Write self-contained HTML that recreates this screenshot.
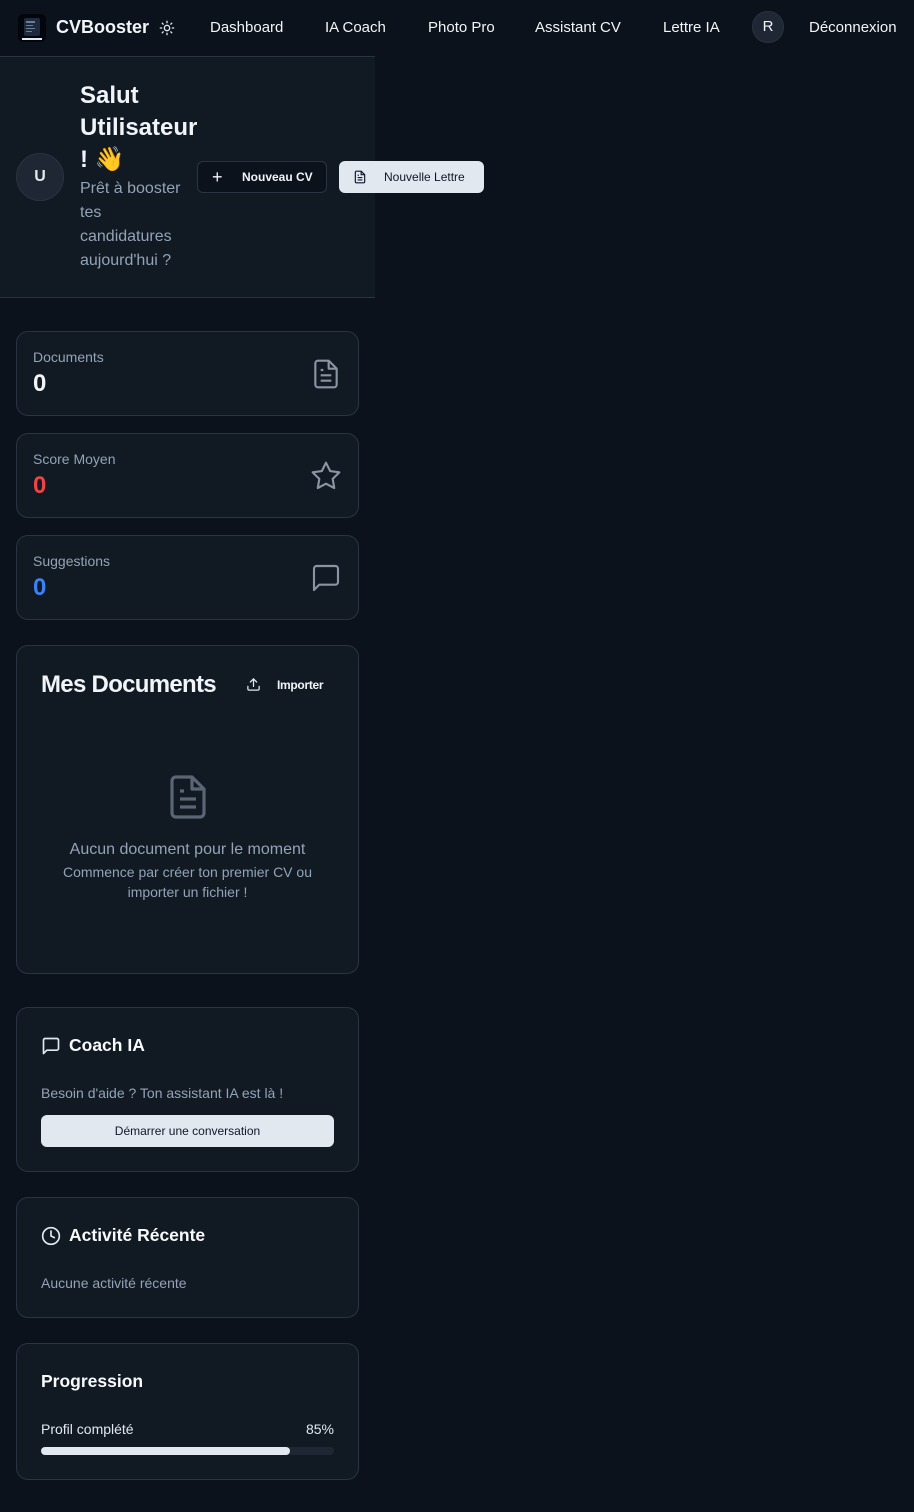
<!DOCTYPE html>
<html><head><meta charset="utf-8"><style>
*{box-sizing:border-box;margin:0;padding:0}
body{width:914px;height:1512px;background:#0c121b;font-family:"Liberation Sans",sans-serif;color:#f1f5f9;position:relative;overflow:hidden}
.a{position:absolute}
.nav{font-size:15px;color:#f1f5f9;top:19px}
.card{position:absolute;left:16px;width:343px;background:#111922;border:1px solid #2a3441;border-radius:12px}
.lbl{position:absolute;left:16px;top:17px;font-size:14px;color:#94a3b8}
.num{position:absolute;left:16px;top:38px;font-size:24px;font-weight:bold}
.ic{position:absolute;right:16px;top:26px}
.h{font-size:17.5px;font-weight:bold;color:#f8fafc}
.mut{color:#94a3b8}
</style></head><body>
<div class="a" style="left:18px;top:14px;width:28px;height:28px;background:#02060c;border-radius:5px">
<div class="a" style="left:6px;top:4px;width:16px;height:18px;background:#1e2a3e;border-radius:2px"></div>
<div class="a" style="left:8px;top:7px;width:9px;height:2px;background:#6b7d95"></div>
<div class="a" style="left:8px;top:11px;width:7px;height:1px;background:#6b7d95"></div>
<div class="a" style="left:8px;top:14px;width:9px;height:1px;background:#6b7d95"></div>
<div class="a" style="left:8px;top:17px;width:6px;height:1px;background:#6b7d95"></div>
<div class="a" style="left:4px;top:24px;width:20px;height:2px;background:#e2e8f0"></div>
</div>
<div class="a" style="left:56px;top:17px;font-size:18px;font-weight:bold">CVBooster</div>
<svg class="a" style="left:159px;top:20px" width="16" height="16" viewBox="0 0 24 24" fill="none" stroke="#e2e8f0" stroke-width="2" stroke-linecap="round"><circle cx="12" cy="12" r="4"/><path d="M12 2v2M12 20v2M4.9 4.9l1.4 1.4M17.7 17.7l1.4 1.4M2 12h2M20 12h2M6.3 17.7l-1.4 1.4M19.1 4.9l-1.4 1.4"/></svg>
<div class="a nav" style="left:210px">Dashboard</div>
<div class="a nav" style="left:325px">IA Coach</div>
<div class="a nav" style="left:428px">Photo Pro</div>
<div class="a nav" style="left:535px">Assistant CV</div>
<div class="a nav" style="left:663px">Lettre IA</div>
<div class="a" style="left:752px;top:11px;width:32px;height:32px;border-radius:50%;background:#1e2733;border:1px solid #2a3441;text-align:center;line-height:30px;font-size:15px">R</div>
<div class="a nav" style="left:809px">Déconnexion</div>
<div class="a" style="left:0;top:56px;width:375px;height:242px;background:#111922;border-top:1px solid #2a3441;border-bottom:1px solid #2a3441"></div>
<div class="a" style="left:16px;top:153px;width:48px;height:48px;border-radius:50%;background:#1e2733;border:1px solid #2a3441;text-align:center;line-height:46px;font-size:16px;font-weight:bold;color:#e2e8f0">U</div>
<div class="a" style="left:80px;top:80px;font-size:24px;font-weight:bold;line-height:32px;width:130px">Salut Utilisateur ! 👋</div>
<div class="a mut" style="left:80px;top:177px;font-size:16px;line-height:24px;width:115px">Prêt à booster tes candidatures aujourd'hui ?</div>
<div class="a" style="left:197px;top:161px;width:130px;height:32px;border:1px solid #2a3441;border-radius:6px;background:#0c121b;font-size:12px;font-weight:bold;line-height:30px">
<span class="a" style="left:14px;top:0;font-size:18px;font-weight:normal">+</span><span class="a" style="left:44px">Nouveau CV</span></div>
<div class="a" style="left:339px;top:161px;width:145px;height:32px;border-radius:6px;background:#e2e8f0;color:#0f172a;font-size:12px;line-height:32px">
<svg class="a" style="left:14px;top:9px" width="14" height="14" viewBox="0 0 24 24" fill="none" stroke="#0f172a" stroke-width="2"><path d="M14 2H6a2 2 0 0 0-2 2v16a2 2 0 0 0 2 2h12a2 2 0 0 0 2-2V8z"/><path d="M14 2v6h6M16 13H8M16 17H8M10 9H8"/></svg>
<span class="a" style="left:45px">Nouvelle Lettre</span></div>
<div class="card" style="top:331px;height:85px"><div class="lbl">Documents</div><div class="num">0</div>
<svg class="ic" width="32" height="32" viewBox="0 0 24 24" fill="none" stroke="#8a94a3" stroke-width="1.6" stroke-linejoin="round"><path d="M14 2H6a2 2 0 0 0-2 2v16a2 2 0 0 0 2 2h12a2 2 0 0 0 2-2V8z"/><path d="M14 2v6h6M16 13H8M16 17H8M10 9H8"/></svg></div>
<div class="card" style="top:433px;height:85px"><div class="lbl">Score Moyen</div><div class="num" style="color:#ef4444">0</div>
<svg class="ic" width="32" height="32" viewBox="0 0 24 24" fill="none" stroke="#8a94a3" stroke-width="1.6" stroke-linejoin="round"><path d="M12 2l3.09 6.26L22 9.27l-5 4.87 1.18 6.88L12 17.77l-6.18 3.25L7 14.14 2 9.27l6.91-1.01z"/></svg></div>
<div class="card" style="top:535px;height:85px"><div class="lbl">Suggestions</div><div class="num" style="color:#3b82f6">0</div>
<svg class="ic" width="32" height="32" viewBox="0 0 24 24" fill="none" stroke="#8a94a3" stroke-width="1.6" stroke-linejoin="round"><path d="M21 15a2 2 0 0 1-2 2H7l-4 4V5a2 2 0 0 1 2-2h14a2 2 0 0 1 2 2z"/></svg></div>
<div class="card" style="top:645px;height:329px">
<div class="a" style="left:24px;top:25px;font-size:24px;font-weight:bold;letter-spacing:-0.7px">Mes Documents</div>
<svg class="a" style="left:229px;top:31px" width="15" height="15" viewBox="0 0 24 24" fill="none" stroke="#e2e8f0" stroke-width="2" stroke-linecap="round"><path d="M21 15v4a2 2 0 0 1-2 2H5a2 2 0 0 1-2-2v-4M17 8l-5-5-5 5M12 3v12"/></svg>
<div class="a" style="left:260px;top:32px;font-size:12px;font-weight:bold;letter-spacing:-0.3px">Importer</div>
<svg class="a" style="left:147px;top:127px" width="48" height="48" viewBox="0 0 24 24" fill="none" stroke="#5b6574" stroke-width="1.6" stroke-linejoin="round"><path d="M14 2H6a2 2 0 0 0-2 2v16a2 2 0 0 0 2 2h12a2 2 0 0 0 2-2V8z"/><path d="M14 2v6h6M16 13H8M16 17H8M10 9H8"/></svg>
<div class="a mut" style="left:0;width:341px;top:195px;text-align:center;font-size:16px">Aucun document pour le moment</div>
<div class="a mut" style="left:30px;width:281px;top:216px;text-align:center;font-size:14px;line-height:20px">Commence par créer ton premier CV ou importer un fichier !</div>
</div>
<div class="card" style="top:1007px;height:165px">
<svg class="a" style="left:24px;top:28px" width="20" height="20" viewBox="0 0 24 24" fill="none" stroke="#e2e8f0" stroke-width="2" stroke-linejoin="round"><path d="M21 15a2 2 0 0 1-2 2H7l-4 4V5a2 2 0 0 1 2-2h14a2 2 0 0 1 2 2z"/></svg>
<div class="a h" style="left:52px;top:27px">Coach IA</div>
<div class="a mut" style="left:24px;top:77px;font-size:14px">Besoin d'aide ? Ton assistant IA est là !</div>
<div class="a" style="left:24px;top:107px;width:293px;height:32px;background:#e2e8f0;border-radius:6px;color:#0f172a;font-size:12px;text-align:center;line-height:32px">Démarrer une conversation</div>
</div>
<div class="card" style="top:1197px;height:121px">
<svg class="a" style="left:24px;top:28px" width="20" height="20" viewBox="0 0 24 24" fill="none" stroke="#e2e8f0" stroke-width="2" stroke-linecap="round"><circle cx="12" cy="12" r="10"/><path d="M12 6v6l4 2"/></svg>
<div class="a h" style="left:52px;top:27px">Activité Récente</div>
<div class="a mut" style="left:24px;top:77px;font-size:14px">Aucune activité récente</div>
</div>
<div class="card" style="top:1343px;height:137px">
<div class="a h" style="left:24px;top:27px">Progression</div>
<div class="a" style="left:24px;top:77px;font-size:14px;color:#e2e8f0">Profil complété</div>
<div class="a" style="right:24px;top:77px;font-size:14px;color:#e2e8f0">85%</div>
<div class="a" style="left:24px;top:103px;width:293px;height:8px;border-radius:4px;background:#1e2733"><div style="width:85%;height:8px;border-radius:4px;background:#e2e8f0"></div></div>
</div>
</body></html>
